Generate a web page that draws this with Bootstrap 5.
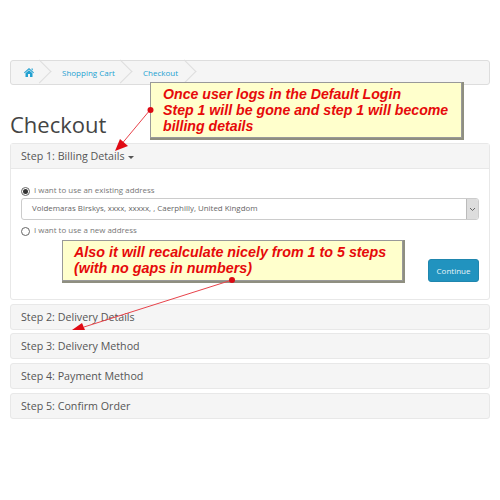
<!DOCTYPE html>
<html lang="en">
<head>
    <meta charset="UTF-8">
    <title>Checkout</title>
    <link rel="stylesheet" href="https://cdn.jsdelivr.net/npm/bootstrap@5.3.0/dist/css/bootstrap.min.css">
    <style>
        body { font-family: "Open Sans", sans-serif; color: #666; background: #fff; font-size: 8px; }
        #page { position: relative; width: 500px; height: 500px; padding: 60px 10px 0 10px; overflow: hidden; }
        #crumbs { height: 25px; background: #f5f5f5; border: 1px solid #ddd; border-radius: 3px; margin-bottom: 23px; padding-left: 13px; font-size: 8px; }
        #crumbs a { color: #23a1d1; text-decoration: none; }
        .crumb-item { position: relative; height: 100%; display: flex; align-items: center; }
        .crumb-item::after { content: ""; position: absolute; right: 4px; top: 2px; width: 17px; height: 17px; border-top: 1px solid #ddd; border-right: 1px solid #ddd; transform: rotate(45deg); }
        .crumb-home { width: 28px; }
        .crumb-cart { width: 81px; }
        .crumb-out { width: 64px; }
        .crumb-cart a, .crumb-out a { margin-left: 10px; }
        #title { font-size: 22px; font-weight: 400; color: #444; margin: 0 0 2px 0; line-height: 33px; height: 33px; }
        .step { border: 1px solid #e8e8e8; border-radius: 3px; background: #f5f5f5; margin-bottom: 3.7px; }
        .step-head { height: 24px; padding: 0 10px; font-size: 10.7px; line-height: 24px; color: #555; }
        .step-open { background: #fff; }
        .step-open .step-head { background: #f5f5f5; border-bottom: 1px solid #e8e8e8; height: 25px; line-height: 25px; }
        #caret { display: inline-block; border-top: 3px solid #555; border-left: 3px solid transparent; border-right: 3px solid transparent; vertical-align: middle; margin-left: 1px; }
        #body1 { height: 130px; padding: 15px 10px 0 10px; position: relative; }
        .opt { font-size: 7.95px; color: #777; height: 14px; }
        .ring { width: 9px; height: 9px; border: 1px solid #666; border-radius: 50%; background: #fff; display: flex; align-items: center; justify-content: center; }
        .ring i { width: 5px; height: 5px; background: #333; border-radius: 50%; }
        #addr { height: 22px; border: 1px solid #ccc; border-radius: 3px; margin: 0 0 4px 0; font-size: 7.9px; color: #666; padding-left: 10px; }
        #addr b { margin-left: auto; width: 12px; height: 20px; background: #ddd; border-left: 1px solid #bbb; border-radius: 0 2px 2px 0; display: flex; align-items: center; justify-content: center; }
        #go { position: absolute; right: 10px; top: 90px; width: 51px; height: 23px; background: #2193bf; border: 1px solid #1f86ae; border-radius: 3px; color: #e8f5fa; font-size: 8px; padding: 0; }
        .note { position: absolute; background: #ffffcc; border: 1px solid #999; box-shadow: 1px 1px 0 1px #8f8f80; color: #e60a0a; font-family: "Liberation Sans", Arial, sans-serif; font-weight: 700; font-style: italic; font-size: 14.15px; line-height: 16px; white-space: nowrap; }
        #note1 { left: 150px; top: 82px; width: 312px; height: 56px; padding: 3px 0 0 12px; }
        #note2 { left: 62px; top: 240px; width: 341px; height: 41px; padding: 3px 0 0 11px; font-size: 14.3px; }
        #arrows { position: absolute; left: 0; top: 0; }
    </style>
</head>
<body>
    <div id="page">
        <div id="crumbs" class="d-flex">
            <div class="crumb-item crumb-home">
                <a href="#"><svg width="10" height="9" viewBox="0 0 20 18" class="d-block"><path fill="#23a1d1" d="M10 0 L20 9 L18.6 10.4 L10 2.8 L1.4 10.4 L0 9 Z M15 1 H17.5 V5 L15 3 Z M10 4.4 L17 10.5 V18 H12 V12 H8 V18 H3 V10.5 Z"/></svg></a>
            </div>
            <div class="crumb-item crumb-cart"><a href="#">Shopping Cart</a></div>
            <div class="crumb-item crumb-out"><a href="#">Checkout</a></div>
        </div>

        <h1 id="title">Checkout</h1>

        <div class="step step-open">
            <div class="step-head">Step 1: Billing Details <span id="caret"></span></div>
            <div id="body1">
                <div class="opt d-flex align-items-center gap-1"><span class="ring"><i></i></span> I want to use an existing address</div>
                <div id="addr" class="d-flex align-items-center">Voldemaras Birskys, xxxx, xxxxx, , Caerphilly, United Kingdom
                    <b><svg width="7" height="5" viewBox="0 0 7 5"><path d="M1 1 L3.5 3.5 L6 1" fill="none" stroke="#666" stroke-width="1"/></svg></b>
                </div>
                <div class="opt d-flex align-items-center gap-1"><span class="ring"></span> I want to use a new address</div>
                <button id="go" class="btn" type="button">Continue</button>
            </div>
        </div>
        <div class="step"><div class="step-head">Step 2: Delivery Details</div></div>
        <div class="step"><div class="step-head">Step 3: Delivery Method</div></div>
        <div class="step"><div class="step-head">Step 4: Payment Method</div></div>
        <div class="step"><div class="step-head">Step 5: Confirm Order</div></div>

        <div id="note1" class="note">Once user logs in the Default Login<br>Step 1 will be gone and step 1 will become<br>billing details</div>
        <div id="note2" class="note">Also it will recalculate nicely from 1 to 5 steps<br>(with no gaps in numbers)</div>

        <svg id="arrows" width="500" height="500" viewBox="0 0 500 500">
            <line x1="150" y1="110" x2="120" y2="146" stroke="#e8434b" stroke-width="1"/>
            <circle cx="150.500" cy="110" r="3" fill="#dc0a14"/>
            <path d="M115 151 L120 139 L128 146 Z" fill="#e00a14"/>
            <line x1="232" y1="280" x2="84" y2="327" stroke="#e8434b" stroke-width="1"/>
            <circle cx="232" cy="280" r="3" fill="#dc0a14"/>
            <path d="M72 330 L82 323 L85 330 Z" fill="#e00a14"/>
        </svg>
    </div>
    <script src="https://cdn.jsdelivr.net/npm/bootstrap@5.3.0/dist/js/bootstrap.bundle.min.js"></script>
</body>
</html>
